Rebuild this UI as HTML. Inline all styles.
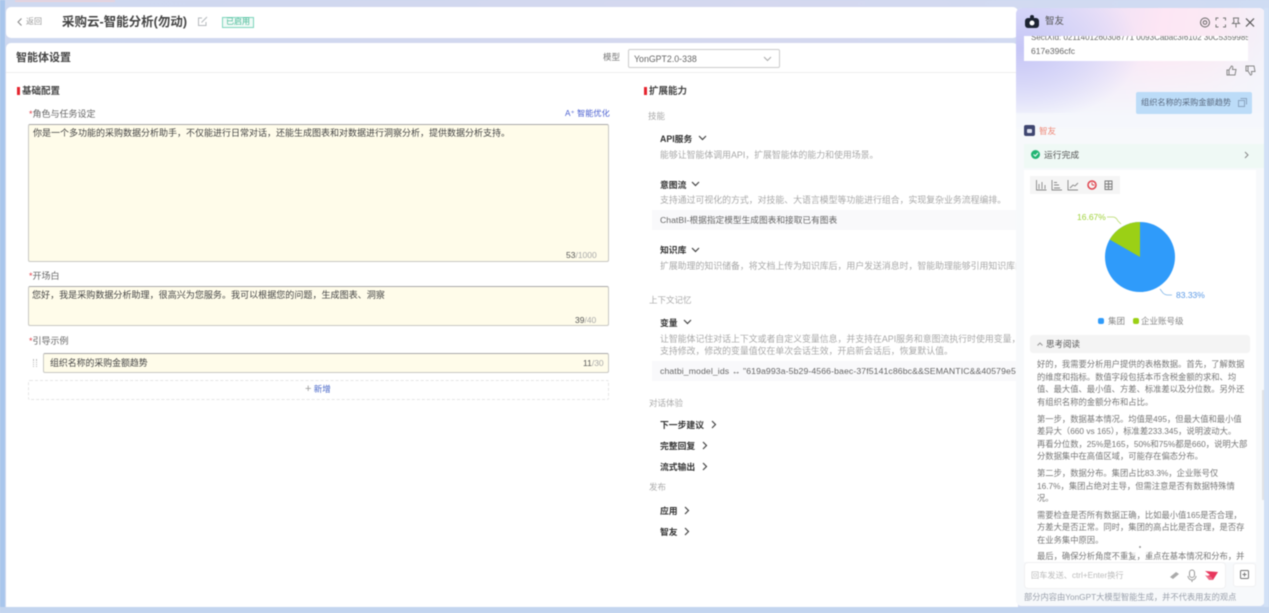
<!DOCTYPE html>
<html lang="zh"><head><meta charset="utf-8"><title>智能体设置</title>
<style>
html,body{margin:0;padding:0;width:1269px;height:613px;overflow:hidden;background:#cdd8f0}
body{font-family:"Liberation Sans","Noto Sans CJK SC",sans-serif;font-size:9px;color:#444}
#r{position:absolute;left:0;top:0;width:1269px;height:613px;overflow:hidden;filter:blur(.5px);background:linear-gradient(90deg,#cfd9f0,#d5d8ef 60%,#cfdcf3)}
.a{position:absolute;box-sizing:border-box}
.t{position:absolute;white-space:nowrap;line-height:12px}
.h{color:#333;font-weight:700;font-size:8.800px}
.g{color:#a8a8a8;font-size:8.900px}
.s{color:#aaa;font-size:8.500px}
.c{color:#777;font-size:8.300px;left:1037px}
.y{background:#fffcea;border:1px solid #c9c9c4;border-top-color:#aaa;border-radius:2px}
svg{position:absolute;overflow:visible}
</style></head><body><div id="r">
<div class="a" style="left:0;top:0;width:5px;height:613px;background:#a9c6ec"></div>
<div class="a" style="left:15px;top:0;width:100px;height:2px;background:#e8d2dc"></div>
<div class="a" style="left:0;top:607px;width:1269px;height:6px;background:#c3d5ef"></div>

<div class="a" style="left:6px;top:7px;width:1012px;height:31px;background:#fff;border-radius:5px"></div>
<svg style="left:17px;top:18px" width="6" height="8" fill="none" stroke="#888" stroke-width="1"><path d="M4.500 .5 1 4l3.500 3.500"/></svg>
<div class="t" style="left:26px;top:16px;color:#999;font-size:8px">返回</div>
<div class="t" style="left:62px;top:16px;font-size:12.500px;font-weight:700;color:#444">采购云-智能分析(勿动)</div>
<svg style="left:197px;top:16px" width="11" height="11" fill="none" stroke="#b5b9bd" stroke-width="1"><path d="M9 6v3.500H1.500V2H5M4.500 6.500 10 1"/></svg>
<div class="a" style="left:222px;top:17px;width:32px;height:11px;border:1px solid #7ed6bd;background:#effaf6"></div>
<div class="t" style="left:226px;top:16px;color:#45b895;font-size:8px">已启用</div>

<div class="a" style="left:6px;top:43px;width:1012px;height:564px;background:#fff;border-radius:5px 5px 0 0"></div>
<div class="a" style="left:6px;top:72px;width:1010px;height:1px;background:#eee"></div>
<div class="t" style="left:16px;top:52px;font-size:11px;font-weight:700;color:#444">智能体设置</div>
<div class="t" style="left:603px;top:51px;color:#777;font-size:8.500px">模型</div>
<div class="a" style="left:628px;top:49px;width:152px;height:19px;border:1px solid #ccc;border-radius:2px;background:#fff"></div>
<div class="t" style="left:634px;top:53px;color:#666;font-size:8.800px">YonGPT2.0-338</div>
<svg style="left:763px;top:56px" width="9" height="6" fill="none" stroke="#aaa" stroke-width="1"><path d="M1 1l3.500 3.500L8 1"/></svg>

<div class="a" style="left:17px;top:87px;width:2.500px;height:8px;background:#e5252f"></div>
<div class="t" style="left:22px;top:86px;font-size:9.500px;font-weight:700;color:#444">基础配置</div>
<div class="t" style="left:29px;top:108px;color:#666;font-size:9px"><span style="color:#e5454f">*</span>角色与任务设定</div>
<div class="t" style="left:565px;top:108px;color:#4a5fd0;font-size:8.200px">A⁺ 智能优化</div>
<div class="a y" style="left:28px;top:124px;width:581px;height:138px"></div>
<div class="t" style="left:33px;top:127px;color:#444;font-size:9px">你是一个多功能的采购数据分析助手，不仅能进行日常对话，还能生成图表和对数据进行洞察分析，提供数据分析支持。</div>
<div class="t" style="left:566px;top:249px;color:#aaa;font-size:8.500px"><span style="color:#555">53</span>/1000</div>
<div class="t" style="left:29px;top:270px;color:#666;font-size:9px"><span style="color:#e5454f">*</span>开场白</div>
<div class="a y" style="left:28px;top:286px;width:581px;height:40px"></div>
<div class="t" style="left:32px;top:289px;color:#444;font-size:9.050px">您好，我是采购数据分析助理，很高兴为您服务。我可以根据您的问题，生成图表、洞察</div>
<div class="t" style="left:575px;top:314px;color:#aaa;font-size:8.500px"><span style="color:#555">39</span>/40</div>
<div class="t" style="left:29px;top:335px;color:#666;font-size:9px"><span style="color:#e5454f">*</span>引导示例</div>
<div class="a" style="left:33px;top:359px;width:4px;height:8px;border-left:1px dotted #bbb;border-right:1px dotted #bbb"></div>
<div class="a y" style="left:43px;top:353px;width:566px;height:20px"></div>
<div class="t" style="left:50px;top:357px;color:#444;font-size:8.900px">组织名称的采购金额趋势</div>
<div class="t" style="left:583px;top:357px;color:#aaa;font-size:8.500px"><span style="color:#555">11</span>/30</div>
<div class="a" style="left:28px;top:380px;width:581px;height:20px;border:1px dashed #e6e6e6;border-radius:2px"></div>
<div class="t" style="left:305px;top:383px;color:#4a68c8;font-size:8.500px"><span style="color:#999;font-size:11px">+</span> 新增</div>

<div class="a" style="left:644px;top:87px;width:2.500px;height:8px;background:#e5252f"></div>
<div class="t" style="left:649px;top:85px;font-size:9.500px;font-weight:700;color:#444;margin-top:1px">扩展能力</div>
<div class="t s" style="left:648px;top:110px">技能</div>
<div class="t h" style="left:660px;top:133px">API服务</div>
<svg style="left:698px;top:135px" width="9" height="6" fill="none" stroke="#444" stroke-width="1.200"><path d="M1 1l3.500 3.500L8 1"/></svg>
<div class="t g" style="left:660px;top:149px">能够让智能体调用API，扩展智能体的能力和使用场景。</div>
<div class="t h" style="left:660px;top:179px">意图流</div>
<svg style="left:691px;top:181px" width="9" height="6" fill="none" stroke="#444" stroke-width="1.200"><path d="M1 1l3.500 3.500L8 1"/></svg>
<div class="t g" style="left:660px;top:194px">支持通过可视化的方式，对技能、大语言模型等功能进行组合，实现复杂业务流程编排。</div>
<div class="a" style="left:652px;top:210px;width:364px;height:20px;background:#f9f9fb"></div>
<div class="t" style="left:660px;top:214px;color:#666;font-size:8.700px">ChatBI-根据指定模型生成图表和接取已有图表</div>
<div class="t h" style="left:660px;top:244px">知识库</div>
<svg style="left:691px;top:247px" width="9" height="6" fill="none" stroke="#444" stroke-width="1.200"><path d="M1 1l3.500 3.500L8 1"/></svg>
<div class="a" style="left:660px;top:259px;width:356px;height:14px;overflow:hidden"><div class="t g" style="left:0;top:1px">扩展助理的知识储备，将文档上传为知识库后，用户发送消息时，智能助理能够引用知识库内容回答问题。</div></div>
<div class="t s" style="left:649px;top:294px">上下文记忆</div>
<div class="t h" style="left:660px;top:317px">变量</div>
<svg style="left:683px;top:319px" width="9" height="6" fill="none" stroke="#444" stroke-width="1.200"><path d="M1 1l3.500 3.500L8 1"/></svg>
<div class="a" style="left:660px;top:332px;width:356px;height:14px;overflow:hidden"><div class="t g" style="left:0;top:1px">让智能体记住对话上下文或者自定义变量信息，并支持在API服务和意图流执行时使用变量，变量值支持修改。</div></div>
<div class="t g" style="left:660px;top:345px">支持修改，修改的变量值仅在单次会话生效，开启新会话后，恢复默认值。</div>
<div class="a" style="left:652px;top:361px;width:364px;height:20px;background:#f9f9fb"></div>
<div class="a" style="left:660px;top:364px;width:356px;height:14px;overflow:hidden"><div class="t" style="left:0;top:1px;color:#666;font-size:8.700px;letter-spacing:.1px">chatbi_model_ids ↔ "619a993a-5b29-4566-baec-37f5141c86bc&amp;&amp;SEMANTIC&amp;&amp;40579e5c-c7ba-4d2e</div></div>
<div class="t s" style="left:649px;top:397px">对话体验</div>
<div class="t h" style="left:660px;top:419px">下一步建议</div>
<svg style="left:711px;top:420px" width="6" height="9" fill="none" stroke="#444" stroke-width="1.200"><path d="M1 1l3.500 3.500L1 8"/></svg>
<div class="t h" style="left:660px;top:440px">完整回复</div>
<svg style="left:702px;top:441px" width="6" height="9" fill="none" stroke="#444" stroke-width="1.200"><path d="M1 1l3.500 3.500L1 8"/></svg>
<div class="t h" style="left:660px;top:461px">流式输出</div>
<svg style="left:702px;top:462px" width="6" height="9" fill="none" stroke="#444" stroke-width="1.200"><path d="M1 1l3.500 3.500L1 8"/></svg>
<div class="t s" style="left:649px;top:481px">发布</div>
<div class="t h" style="left:660px;top:505px">应用</div>
<svg style="left:684px;top:506px" width="6" height="9" fill="none" stroke="#444" stroke-width="1.200"><path d="M1 1l3.500 3.500L1 8"/></svg>
<div class="t h" style="left:660px;top:526px">智友</div>
<svg style="left:684px;top:527px" width="6" height="9" fill="none" stroke="#444" stroke-width="1.200"><path d="M1 1l3.500 3.500L1 8"/></svg>

<!-- chat panel -->
<div class="a" style="left:1016px;top:8px;width:249px;height:598px;border-radius:6px;background:#f8f8fb;overflow:hidden">
  <div class="a" style="left:0;top:0;width:249px;height:120px;background:linear-gradient(100deg,#dcdcfa,#fde6f4 55%,#fbeaf4 75%,#f1f3fb)"></div>
  <div class="a" style="left:0;top:30px;width:249px;height:92px;background:linear-gradient(180deg,rgba(246,248,252,0),#f5f7fc 85%)"></div>
  <div class="a" style="left:0;top:0;width:170px;height:105px;background:radial-gradient(ellipse 120px 75px at 5px 40px,#c6c6f6 0%,rgba(210,210,248,.75) 50%,rgba(235,235,250,0) 100%)"></div>
  <div class="a" style="left:0;top:120px;width:249px;height:478px;background:#f7f9fb"></div>
</div>
<svg style="left:1025px;top:15px" width="14" height="13"><rect x="0" y="3" width="14" height="10" rx="3" fill="#1d2433"/><circle cx="7" cy="2" r="2" fill="#1d2433"/><circle cx="7" cy="8" r="2.500" fill="#fff"/></svg>
<div class="t" style="left:1045px;top:16px;font-size:9.500px;color:#555">智友</div>
<svg style="left:1200px;top:17px" width="60" height="11" fill="none" stroke="#666" stroke-width="1"><circle cx="5" cy="5.500" r="4.500"/><circle cx="5" cy="5.500" r="1.800"/><path d="M16 3.500V1h2.500M23 1h2.500v2.500M25.500 7.500V10H23M18.500 10H16V7.500" stroke="#777"/><path d="M33.500 1h5l-.5 4 1.500 1.500h-7L34 5zM36 6.500V10.500" stroke="#777"/><path d="M46 1.500l8 8M54 1.500l-8 8" stroke="#555" stroke-width="1.200"/></svg>
<div class="a" style="left:1024px;top:36px;width:224px;height:25px;background:#fff"></div>
<div class="a" style="left:1031px;top:36px;width:217px;height:8px;overflow:hidden"><div class="t" style="left:0;top:-4px;color:#666;font-size:8px">SectXId: 0211401260308771 0093Cabac3f6102 30C5359985C85</div></div>
<div class="t" style="left:1031px;top:45px;color:#666;font-size:8.500px">617e396cfc</div>
<svg style="left:1226px;top:65px" width="30" height="11" fill="none" stroke="#888" stroke-width="1"><path d="M1 5h2v5H1zM3 5l2.500-4c1 0 1.500 .8 1.200 2L6.500 4.500H10l-1 5.500H3"/><path d="M20 6h2V1h-2zM22 6l2.500 4c1 0 1.500-.8 1.200-2L25.500 6.500H29L28 1h-6"/></svg>
<div class="a" style="left:1136px;top:92px;width:116px;height:22px;background:#bcdcf8;border-radius:2px"></div>
<div class="t" style="left:1141px;top:97px;color:#5a6a80;font-size:8.200px">组织名称的采购金额趋势</div>
<svg style="left:1238px;top:98px" width="9" height="9" fill="none" stroke="#8aa4c0"><path d="M2.500 .5h6v6M.5 2.500h6v6h-6z"/></svg>
<div class="a" style="left:1024px;top:125px;width:11px;height:11px;background:#3f4670;border-radius:2px"></div>
<div class="a" style="left:1027px;top:129px;width:5px;height:4px;background:#dfe3f0;border-radius:1px"></div>
<div class="t" style="left:1039px;top:125px;color:#ee8a7a;font-size:8.500px">智友</div>
<div class="a" style="left:1024px;top:144px;width:240px;height:24px;background:#eff9f5"></div>
<div class="a" style="left:1031px;top:150px;width:9px;height:9px;border-radius:50%;background:#22b573"></div>
<svg style="left:1033px;top:152px" width="6" height="5" fill="none" stroke="#fff"><path d="M.5 2.500l1.800 1.500L5 1"/></svg>
<div class="t" style="left:1044px;top:149px;color:#555;font-size:8.800px">运行完成</div>
<svg style="left:1244px;top:151px" width="5" height="8" fill="none" stroke="#888"><path d="M1 1l3 3-3 3"/></svg>

<div class="a" style="left:1024px;top:170px;width:232px;height:392px;background:#fff"></div>
<div class="a" style="left:1030px;top:176px;width:90px;height:18px;background:#f5f5f5"></div>
<svg style="left:1036px;top:180px" width="80" height="11" fill="none" stroke="#888" stroke-width=".9"><path d="M.5 0v10h10M3 9V4M6 9V2M9 9V5"/><path d="M16 0v10h10M18 8h6M18 5h5M18 2.500h3"/><path d="M32 0v10h10M34 8l3-3 2 1 3-3"/><circle cx="56" cy="5" r="4" stroke="#e0454f" stroke-width="1.500"/><path d="M56 5V2.500M56 5h2.500" stroke="#e0454f"/><path d="M69 1h7v8.500h-7zM69 4h7M69 6.800h7M72.500 1v8.500" stroke="#777"/></svg>
<svg style="left:1075px;top:205px" width="130" height="105" viewBox="1075 205 130 105">
  <circle cx="1140" cy="257" r="35" fill="#2f9bfa"/>
  <path d="M1140 257V222A35 35 0 0 0 1109.700 239.500Z" fill="#9bd015"/>
  <path d="M1107 217h6q3 0 5 4l3 3" fill="none" stroke="#b6d96a" stroke-width=".8"/>
  <path d="M1160 289l3 4q2 2 5 2h4" fill="none" stroke="#7fb5e8" stroke-width=".8"/>
</svg>
<div class="t" style="left:1077px;top:211px;color:#9fd23a;font-size:8.500px">16.67%</div>
<div class="t" style="left:1176px;top:289px;color:#5c9ae6;font-size:8.500px">83.33%</div>
<div class="a" style="left:1098px;top:318px;width:6px;height:6px;border-radius:2px;background:#2f9bfa"></div>
<div class="t" style="left:1108px;top:315px;color:#888;font-size:8.500px">集团</div>
<div class="a" style="left:1133px;top:318px;width:6px;height:6px;border-radius:2px;background:#9bd015"></div>
<div class="t" style="left:1141px;top:315px;color:#888;font-size:8.500px">企业账号级</div>

<div class="a" style="left:1030px;top:335px;width:220px;height:18px;background:#f4f4f4;border-radius:3px"></div>
<svg style="left:1037px;top:342px" width="6" height="4" fill="none" stroke="#999"><path d="M.5 3.500 3 1l2.500 2.500"/></svg>
<div class="t" style="left:1046px;top:338px;color:#555;font-size:8.500px">思考阅读</div>

<div class="t c" style="top:358px">好的，我需要分析用户提供的表格数据。首先，了解数据</div>
<div class="t c" style="top:371px">的维度和指标。数值字段包括本币含税金额的求和、均</div>
<div class="t c" style="top:383px">值、最大值、最小值、方差、标准差以及分位数。另外还</div>
<div class="t c" style="top:396px">有组织名称的金额分布和占比。</div>
<div class="t c" style="top:413px">第一步，数据基本情况。均值是495，但最大值和最小值</div>
<div class="t c" style="top:425px">差异大（660 vs 165），标准差233.345，说明波动大。</div>
<div class="t c" style="top:438px">再看分位数，25%是165，50%和75%都是660，说明大部</div>
<div class="t c" style="top:450px">分数据集中在高值区域，可能存在偏态分布。</div>
<div class="t c" style="top:467px">第二步，数据分布。集团占比83.3%，企业账号仅</div>
<div class="t c" style="top:480px">16.7%，集团占绝对主导，但需注意是否有数据特殊情</div>
<div class="t c" style="top:492px">况。</div>
<div class="t c" style="top:509px">需要检查是否所有数据正确，比如最小值165是否合理，</div>
<div class="t c" style="top:521px">方差大是否正常。同时，集团的高占比是否合理，是否存</div>
<div class="t c" style="top:534px">在业务集中原因。</div>
<div class="a" style="left:1024px;top:549px;width:232px;height:13px;overflow:hidden"><div class="t c" style="left:13px;top:1px">最后，确保分析角度不重复，重点在基本情况和分布，并</div></div>
<div class="a" style="left:1129px;top:535px;width:22px;height:22px;border-radius:50%;background:rgba(255,255,255,.75)"></div>
<div class="a" style="left:1139px;top:546px;width:2px;height:2px;border-radius:50%;background:#999"></div>
<div class="a" style="left:1262px;top:390px;width:2px;height:110px;background:#e2e2e4"></div>
<div class="a" style="left:1264px;top:8px;width:5px;height:599px;background:#d2e1f6"></div>

<div class="a" style="left:1024px;top:562px;width:202px;height:27px;background:#fff;border-radius:4px;border:1px solid #f0f0f2"></div>
<div class="t" style="left:1031px;top:570px;color:#bbb;font-size:8.200px">回车发送、ctrl+Enter换行</div>
<svg style="left:1169px;top:569px" width="50" height="13"><path d="M1 8l6-5 3 2-6 5z" fill="#aaa"/><path d="M23 1a2.500 2.500 0 0 1 2.500 2.500V6a2.500 2.500 0 0 1-5 0V3.500A2.500 2.500 0 0 1 23 1zM19 7a4 4 0 0 0 8 0M23 11v2" fill="none" stroke="#999"/><path d="M36 2l13 1-5 8-2-3-4-1 3-1z" fill="#e8375d"/><path d="M36 6l6 2 2 3-4 0z" fill="#ee6a86"/></svg>
<div class="a" style="left:1233px;top:563px;width:23px;height:24px;background:#fff;border-radius:3px;border:1px solid #f0f0f2"></div>
<svg style="left:1240px;top:570px" width="9" height="9" fill="none" stroke="#777"><rect x=".5" y=".5" width="8" height="8" rx="1"/><path d="M4.500 2.500v4M2.500 4.500h4"/></svg>
<div class="t" style="left:1024px;top:592px;color:#9aa0ab;font-size:8.250px">部分内容由YonGPT大模型智能生成，并不代表用友的观点</div>
</div></body></html>
